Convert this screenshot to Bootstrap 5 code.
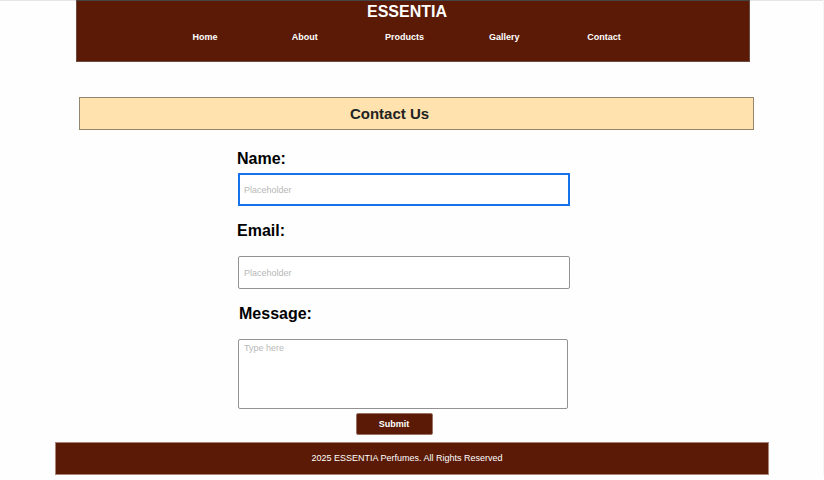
<!DOCTYPE html>
<html lang="en">
<head>
<meta charset="utf-8">
<meta name="viewport" content="width=device-width, initial-scale=1">
<title>ESSENTIA - Contact Us</title>
<link href="https://cdn.jsdelivr.net/npm/bootstrap@5.3.0/dist/css/bootstrap.min.css" rel="stylesheet">
<style>
  :root { --brand: #5a1a05; --sand: #ffe2ae; }
  body { font-family: "Liberation Sans", Arial, sans-serif; font-size: 9px; line-height: 12px; color: #000; background: #fefefe; border-right: 1px solid #f5f5f5; }
  .top-rule { border-top: 1px solid #e6e6e6; }
  .site-header { margin: -1px 73px 0 76px; padding-bottom: 18px; background: var(--brand); border: 1px solid #6b4a40; border-top-color: #444; }
  .site-name { font-size: 16px; line-height: 22px; padding-right: 12px; }
  .site-nav { padding: 0 95px 0 78px; margin-top: 8px; }
  .site-nav a { font-size: 9px; line-height: 12px; }
  .page-title { margin: 35px 69px 0 79px; padding-right: 54px; background: var(--sand); border: 1px solid #93866f; color: #222; }
  .page-title h1 { font-size: 15px; line-height: 31px; }
  .contact-form { margin: 0 253px 0 238px; padding-top: 4px; }
  .field { margin-top: 15px; }
  .contact-form label { font-size: 16px; line-height: 20px; margin: 0 0 15px -1px; }
  .contact-form .form-control { font-size: 9px; line-height: 12px; color: #222; padding: 2px 5px; border: 1px solid #929292; border-radius: 2px; background: #fff; box-shadow: none; }
  .contact-form input.form-control { height: 33px; }
  .contact-form .form-control.active-field { border: 2px solid #1673ec; border-radius: 0; padding: 2px 4px; }
  .contact-form .form-control::placeholder { color: #b8b8b8; opacity: 1; }
  .contact-form textarea.form-control { height: 70px; resize: none; }
  .message-group { padding-right: 2px; }
  .contact-form .message-group label { margin-left: 1px; }
  .btn-brand { --bs-btn-color: #fff; --bs-btn-bg: var(--brand); --bs-btn-border-color: #9a7264; --bs-btn-hover-color: #fff; --bs-btn-hover-bg: #702810; width: 77px; height: 22px; padding: 0; font-size: 9px; line-height: 12px; border-radius: 2px; }
  .submit-row { padding-right: 20px; margin-top: 4px; }
  .site-footer { margin: 7px 54px 0 55px; padding: 9px 10px 10px 0; background: var(--brand); border: 1px solid #aa8478; }
</style>
<script src="https://cdn.jsdelivr.net/npm/bootstrap@5.3.0/dist/js/bootstrap.bundle.min.js"></script>
</head>
<body>
<div class="top-rule">
  <header class="site-header text-white text-center">
    <div class="site-name fw-bold">ESSENTIA</div>
    <nav class="site-nav" aria-label="Main">
      <ul class="nav nav-fill flex-nowrap">
        <li class="nav-item w-100"><a class="nav-link p-0 fw-bold text-white" href="#home">Home</a></li>
        <li class="nav-item w-100"><a class="nav-link p-0 fw-bold text-white" href="#about">About</a></li>
        <li class="nav-item w-100"><a class="nav-link p-0 fw-bold text-white" href="#products">Products</a></li>
        <li class="nav-item w-100"><a class="nav-link p-0 fw-bold text-white" href="#gallery">Gallery</a></li>
        <li class="nav-item w-100"><a class="nav-link p-0 fw-bold text-white" href="#contact">Contact</a></li>
      </ul>
    </nav>
  </header>
  <main>
    <div class="page-title text-center"><h1 class="fw-bold m-0">Contact Us</h1></div>
    <form class="contact-form d-flex flex-column">
      <div class="field d-flex flex-column">
        <label class="fw-bold mb-1" for="name">Name:</label>
        <input class="form-control active-field" id="name" type="text" placeholder="Placeholder">
      </div>
      <div class="field d-flex flex-column">
        <label class="fw-bold" for="email">Email:</label>
        <input class="form-control" id="email" type="email" placeholder="Placeholder">
      </div>
      <div class="field message-group d-flex flex-column">
        <label class="fw-bold" for="message">Message:</label>
        <textarea class="form-control" id="message" placeholder="Type here"></textarea>
      </div>
      <div class="submit-row d-flex justify-content-center"><button class="btn btn-brand fw-bold" type="submit">Submit</button></div>
    </form>
  </main>
  <footer class="site-footer text-white text-center">2025 ESSENTIA Perfumes. All Rights Reserved</footer>
</div>
</body>
</html>
